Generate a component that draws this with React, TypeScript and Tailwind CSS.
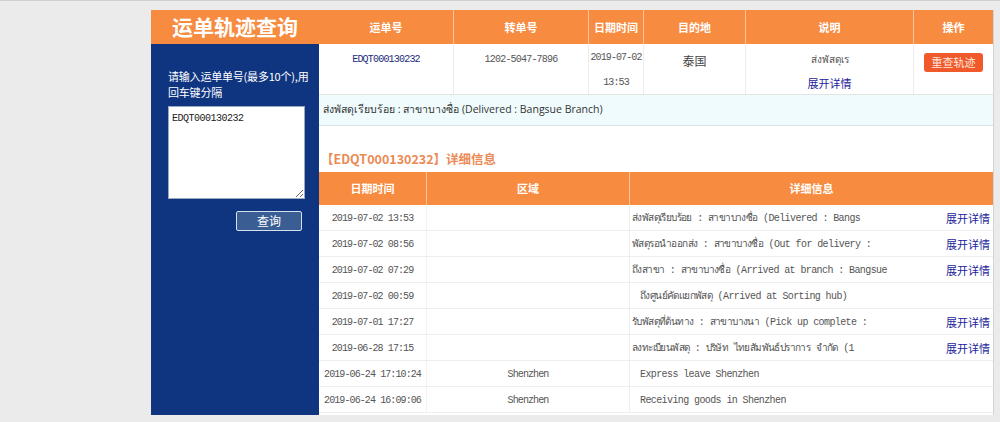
import React from "react";

const cjk = '"Noto Sans CJK SC", "Liberation Sans", sans-serif';
const mono = '"Liberation Mono", "Noto Sans CJK SC", monospace';

const tracks = [
  { time: "2019-07-02 13:53", area: "", detail: "ส่งพัสดุเรียบร้อย : สาขาบางซื่อ (Delivered : Bangs", more: true, indent: false },
  { time: "2019-07-02 08:56", area: "", detail: "พัสดุรอนำออกส่ง : สาขาบางซื่อ (Out for delivery :", more: true, indent: false },
  { time: "2019-07-02 07:29", area: "", detail: "ถึงสาขา : สาขาบางซื่อ (Arrived at branch : Bangsue", more: true, indent: false },
  { time: "2019-07-02 00:59", area: "", detail: "ถึงศูนย์คัดแยกพัสดุ (Arrived at Sorting hub)", more: false, indent: true },
  { time: "2019-07-01 17:27", area: "", detail: "รับพัสดุที่ต้นทาง : สาขาบางนา (Pick up complete :", more: true, indent: false },
  { time: "2019-06-28 17:15", area: "", detail: "ลงทะเบียนพัสดุ : บริษัท ไทยสัมพันธ์ปราการ จำกัด (1", more: true, indent: false },
  { time: "2019-06-24 17:10:24", area: "Shenzhen", detail: "Express leave Shenzhen", more: false, indent: true },
  { time: "2019-06-24 16:09:06", area: "Shenzhen", detail: "Receiving goods in Shenzhen", more: false, indent: true },
];

function Sidebar() {
  return (
    <div className="flex w-[168px] flex-col bg-[#0f3581]">
      <div
        className="flex h-[34px] items-center justify-center bg-[#f78b3f] text-[21px] font-bold text-white"
        style={{ fontFamily: cjk }}
      >
        运单轨迹查询
      </div>
      <div className="pl-[17px] pt-[24px]">
        <p className="w-[146px] text-[11px] leading-[16px] tracking-[-0.2px] text-white" style={{ fontFamily: cjk }}>
          请输入运单单号(最多10个),用回车键分隔
        </p>
        <textarea
          className="mt-[6px] block h-[93px] w-[137px] resize-y border border-[#9aa8c0] bg-white px-[3px] py-[4px] text-[10px] tracking-[-0.5px] text-[#222] outline-none"
          style={{ fontFamily: mono }}
          defaultValue="EDQT000130232"
        />
        <div className="mt-[12px] flex w-[134px] justify-end">
          <button
            className="h-[20px] w-[66px] rounded-[2px] border border-[#d6e0ee] bg-[#3a5d94] text-[12px] text-white"
            style={{ fontFamily: cjk }}
          >
            查询
          </button>
        </div>
      </div>
    </div>
  );
}

function TopTable() {
  const head = "flex items-center justify-center border-r border-[#fbc39a] text-[11px] font-bold text-white";
  const cell = "flex flex-col items-center border-r border-[#ececec] pt-[8px]";
  return (
    <div style={{ fontFamily: cjk }}>
      <div className="flex h-[34px] bg-[#f78b3f]">
        <div className={`${head} w-[135px]`}>运单号</div>
        <div className={`${head} w-[135px]`}>转单号</div>
        <div className={`${head} w-[55px]`}>日期时间</div>
        <div className={`${head} w-[102px]`}>目的地</div>
        <div className={`${head} w-[168px]`}>说明</div>
        <div className={`${head} flex-1 border-r-0`}>操作</div>
      </div>
      <div className="flex h-[51px] border-b border-[#e4e4e4] bg-white">
        <div className={`${cell} w-[135px]`}>
          <span className="text-[10px] tracking-[-0.8px] text-[#1b2a7a]" style={{ fontFamily: mono }}>
            EDQT000130232
          </span>
        </div>
        <div className={`${cell} w-[135px]`}>
          <span className="text-[10px] tracking-[-0.8px] text-[#555]" style={{ fontFamily: mono }}>
            1202-5047-7896
          </span>
        </div>
        <div className={`${cell} w-[55px]`}>
          <span className="text-[10px] leading-[12px] tracking-[-0.9px] text-[#555]" style={{ fontFamily: mono }}>
            2019-07-02
          </span>
          <span className="mt-[13px] text-[10px] leading-[12px] tracking-[-0.9px] text-[#555]" style={{ fontFamily: mono }}>
            13:53
          </span>
        </div>
        <div className={`${cell} w-[102px] pt-[5px]`}>
          <span className="text-[12px] text-[#444]">泰国</span>
        </div>
        <div className={`${cell} w-[168px] pt-[6px]`}>
          <span className="text-[10px] leading-[14px] text-[#555]">ส่งพัสดุเร</span>
          <span className="mt-[10px] text-[11px] leading-[14px] text-[#1c1c9a]">展开详情</span>
        </div>
        <div className="flex flex-1 justify-center pt-[9px]">
          <button className="h-[19px] w-[59px] rounded-[3px] bg-[#f05a2b] text-[11px] text-[#fde8df]">重查轨迹</button>
        </div>
      </div>
      <div
        className="flex h-[31px] items-center border-b border-[#d6e4ea] bg-[#f0fbfd] pl-[4px] text-[10.5px] text-[#333]"
        style={{ fontFamily: '"Open Sans", "Noto Sans", sans-serif' }}
      >
        ส่งพัสดุเรียบร้อย : สาขาบางซื่อ (Delivered : Bangsue Branch)
      </div>
    </div>
  );
}

function DetailTable() {
  return (
    <div style={{ fontFamily: cjk }}>
      <div className="flex h-[46px] items-end pb-[3px] pl-[2px] text-[12.5px] font-bold text-[#ec8a55]">
        【EDQT000130232】详细信息
      </div>
      <div className="flex h-[33px] bg-[#f78b3f] text-[11px] font-bold text-white">
        <div className="flex w-[108px] items-center justify-center border-r border-[#fbc39a]">日期时间</div>
        <div className="flex w-[203px] items-center justify-center border-r border-[#fbc39a]">区域</div>
        <div className="flex flex-1 items-center justify-center">详细信息</div>
      </div>
      {tracks.map((t) => (
        <div key={t.time} className="flex h-[26px] border-b border-[#eeeeee] bg-white text-[#555]">
          <div
            className="flex w-[108px] items-center justify-center border-r border-[#f2f2f2] pt-[2px] text-[10px] tracking-[-0.9px]"
            style={{ fontFamily: mono }}
          >
            {t.time}
          </div>
          <div
            className="flex w-[203px] items-center justify-center border-r border-[#eeeeee] pt-[2px] text-[10px] tracking-[-0.9px]"
            style={{ fontFamily: mono }}
          >
            {t.area}
          </div>
          <div className="flex flex-1 items-center justify-between pr-[3px] pt-[2px]">
            <span
              className={`whitespace-nowrap text-[10px] tracking-[-0.6px] ${t.indent ? "pl-[10px]" : "pl-[2px]"}`}
              style={{ fontFamily: '"Liberation Mono", "Noto Sans", "DejaVu Sans", monospace' }}
            >
              {t.detail}
            </span>
            {t.more && <span className="text-[11px] text-[#1c1c9a]">展开详情</span>}
          </div>
        </div>
      ))}
    </div>
  );
}

export default function App() {
  return (
    <div className="h-[422px] w-[1000px] overflow-hidden border-t border-[#cfcfcf] bg-[#ebebeb]">
      <div className="ml-[151px] mt-[9px] flex h-[405px] w-[843px] overflow-hidden border-r border-[#d4d4d4] bg-white">
        <Sidebar />
        <div className="flex-1">
          <TopTable />
          <DetailTable />
        </div>
      </div>
    </div>
  );
}
